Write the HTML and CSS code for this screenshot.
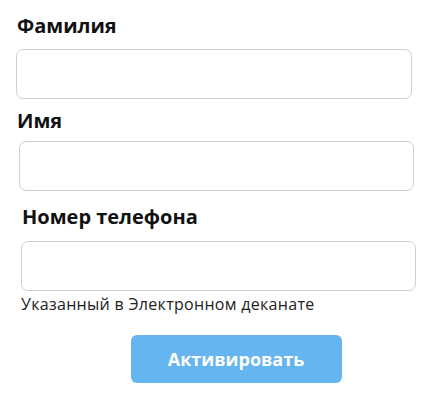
FILE: index.html
```html
<!DOCTYPE html>
<html lang="ru">
<head>
  <meta charset="UTF-8" />
  <meta name="viewport" content="width=device-width, initial-scale=1.0"/>
  <title>Активация</title>
  <link rel="stylesheet" href="styles.css">
</head>
<body>
  <form class="activate-form" onsubmit="return false">
    <div class="field field-surname">
      <label class="field-label" for="surname">Фамилия</label>
      <input class="field-input" id="surname" type="text">
    </div>

    <div class="field field-name">
      <label class="field-label" for="name">Имя</label>
      <input class="field-input" id="name" type="text">
    </div>

    <div class="field field-phone">
      <label class="field-label" for="phone">Номер телефона</label>
      <input class="field-input" id="phone" type="tel">
      <div class="field-hint">Указанный в Электронном деканате</div>
    </div>

    <div class="actions">
      <button class="submit-button" type="submit">Активировать</button>
    </div>
  </form>
</body>
</html>
```

FILE: styles.css
```css
body {
  margin: 0;
  font-family: 'Open Sans', 'Noto Sans', sans-serif;
  background-color: #fff;
  color: #111;
}
.activate-form {
  padding-top: 12px;
  width: 430px;
}
.field {
  display: flex;
  flex-direction: column;
}
.field-label {
  font-size: 20px;
  font-weight: 700;
  line-height: 28px;
}
.field-input {
  box-sizing: border-box;
  height: 50px;
  border: 1px solid #cfcfcf;
  border-radius: 7px;
  background: #fff;
  font-size: 16px;
  padding: 0 12px;
  outline: none;
}
.field-surname {
  margin-left: 16px;
  width: 396px;
}
.field-surname .field-label {
  margin-left: 1px;
  margin-bottom: 9px;
}
.field-name {
  margin-top: 8px;
  margin-left: 19px;
  width: 395px;
}
.field-name .field-label {
  margin-left: -2px;
  margin-bottom: 6px;
}
.field-phone {
  margin-top: 12px;
  margin-left: 21px;
  width: 395px;
}
.field-phone .field-label {
  margin-left: 1px;
  margin-bottom: 10px;
}
.field-hint {
  font-size: 16px;
  line-height: 20px;
  letter-spacing: 0.3px;
  margin-top: 3px;
  color: #222;
}
.actions {
  display: flex;
  justify-content: center;
  padding-left: 42px;
  margin-top: 21px;
}
.submit-button {
  width: 211px;
  height: 48px;
  border: none;
  border-radius: 6px;
  background-color: #64b5f0;
  color: #fff;
  font-family: inherit;
  font-size: 18px;
  font-weight: 700;
  cursor: pointer;
}
```
